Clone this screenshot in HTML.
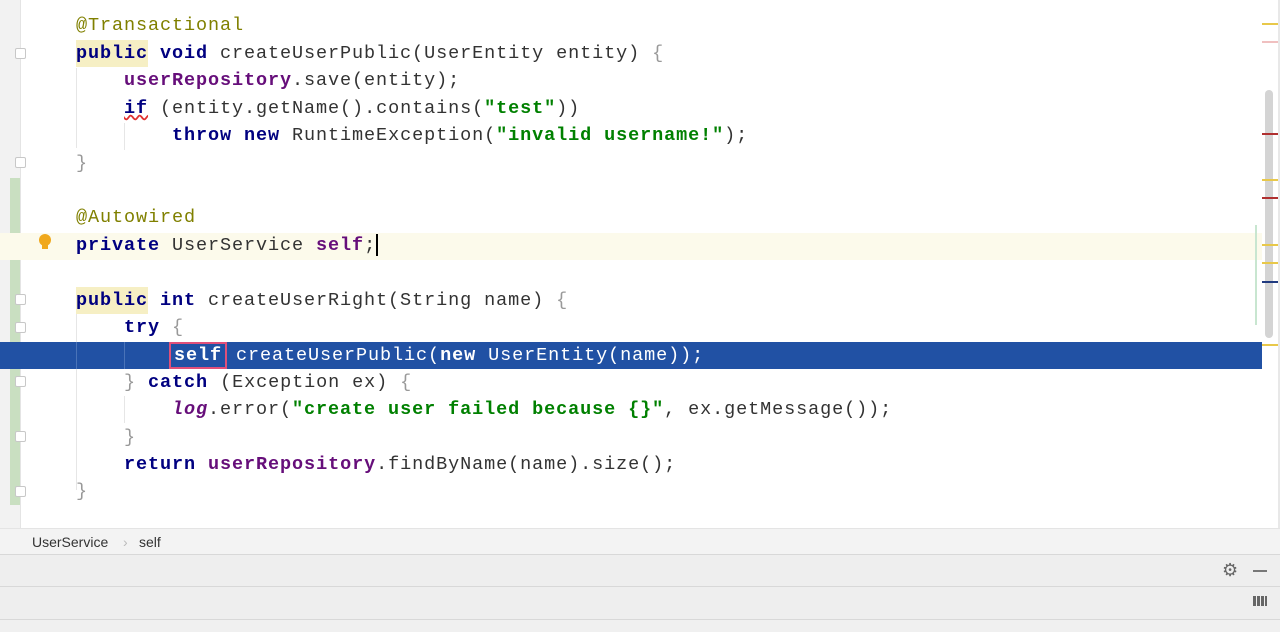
<!DOCTYPE html>
<html><head><meta charset="utf-8"><style>
*{margin:0;padding:0;box-sizing:border-box}
body{width:1280px;height:632px;overflow:hidden;background:#fff;position:relative;font-family:"Liberation Mono",monospace}
.gut{position:absolute;left:0;top:0;width:21px;height:528px;background:#f2f2f2;border-right:1px solid #e4e4e4}
.chg{position:absolute;left:10px;top:178px;width:10px;height:327px;background:#c9dfc1}
.line{position:absolute;left:0;width:1262px;height:27px}
.code{position:absolute;left:76px;font-size:18.5px;letter-spacing:0.9px;line-height:27px;white-space:pre;color:#333}
.k{color:#000080;font-weight:bold}
.a{color:#808000}
.f{color:#660e7a;font-weight:bold}
.s{color:#008000;font-weight:bold}
.g{color:#999}
.ind{position:absolute;width:1px;background:#e6e6e6}
.fold{position:absolute;left:15px;width:11px;height:11px;border:1px solid #c8c8c8;background:#fff;border-radius:2px}
.mk{position:absolute;left:1262px;width:16px;height:2px}
</style></head><body>
<div class="gut"></div>
<div class="chg"></div>
<div class="line" style="top:233px;background:#fcfaeb"></div>
<div class="line" style="top:342px;background:#2151a4;height:27px"></div>
<div style="position:absolute;left:76px;top:40px;width:72px;height:27px;background:#f6efc4"></div>
<div style="position:absolute;left:76px;top:287px;width:72px;height:27px;background:#f6efc4"></div>
<div class="ind" style="left:76px;top:68px;height:80px"></div>
<div class="ind" style="left:124px;top:123px;height:27px"></div>
<div class="ind" style="left:76px;top:314px;height:176px"></div>
<div class="ind" style="left:124px;top:342px;height:27px;background:#4a73b8"></div>
<div class="ind" style="left:76px;top:342px;height:27px;background:#4a73b8"></div>
<div class="ind" style="left:124px;top:396px;height:27px"></div>
<div class="fold" style="top:48px"></div>
<div class="fold" style="top:157px"></div>
<div class="fold" style="top:294px"></div>
<div class="fold" style="top:322px"></div>
<div class="fold" style="top:376px"></div>
<div class="fold" style="top:431px"></div>
<div class="fold" style="top:486px"></div>
<div style="position:absolute;left:39px;top:234px;width:12px;height:12px;border-radius:50%;background:#f0a81c"></div>
<div style="position:absolute;left:42px;top:245px;width:6px;height:4px;background:#f0a81c"></div>
<div class="code" style="top:12px"><span class="a">@Transactional</span></div>
<div class="code" style="top:40px"><span class="k">public void</span> createUserPublic(UserEntity entity) <span class="g">{</span></div>
<div class="code" style="top:67px">    <span class="f">userRepository</span>.save(entity);</div>
<div class="code" style="top:95px">    <span class="k" style="text-decoration:underline wavy #e03030">if</span> (entity.getName().contains(<span class="s">"test"</span>))</div>
<div class="code" style="top:122px">        <span class="k">throw new</span> RuntimeException(<span class="s">"invalid username!"</span>);</div>
<div class="code" style="top:150px"><span class="g">}</span></div>
<div class="code" style="top:204px"><span class="a">@Autowired</span></div>
<div class="code" style="top:232px"><span class="k">private</span> UserService <span class="f">self</span>;<span style="display:inline-block;width:2px;height:22px;background:#000;vertical-align:middle"></span></div>
<div class="code" style="top:287px"><span class="k">public int</span> createUserRight(String name) <span class="g">{</span></div>
<div class="code" style="top:314px">    <span class="k">try</span> <span class="g">{</span></div>
<div class="code" style="top:342px;color:#fff">        <span style="font-weight:bold;outline:2px solid #e0507a;outline-offset:1px;padding:0 2px">self</span> createUserPublic(<span style="font-weight:bold">new</span> UserEntity(name));</div>
<div class="code" style="top:369px">    <span class="g">}</span> <span class="k">catch</span> (Exception ex) <span class="g">{</span></div>
<div class="code" style="top:396px">        <span class="f" style="font-style:italic">log</span>.error(<span class="s">"create user failed because {}"</span>, ex.getMessage());</div>
<div class="code" style="top:424px">    <span class="g">}</span></div>
<div class="code" style="top:451px">    <span class="k">return</span> <span class="f">userRepository</span>.findByName(name).size();</div>
<div class="code" style="top:478px"><span class="g">}</span></div>
<div style="position:absolute;left:1265px;top:90px;width:8px;height:248px;background:#d4d4d4;border-radius:4px"></div>
<div style="position:absolute;left:1255px;top:225px;width:2px;height:100px;background:#c8e6d0"></div>
<div class="mk" style="top:23px;background:#e8c84a"></div>
<div class="mk" style="top:41px;background:#f0c0c0"></div>
<div class="mk" style="top:133px;background:#b03030"></div>
<div class="mk" style="top:179px;background:#e8c84a"></div>
<div class="mk" style="top:197px;background:#b03030"></div>
<div class="mk" style="top:244px;background:#e8c84a"></div>
<div class="mk" style="top:262px;background:#e8c84a"></div>
<div class="mk" style="top:281px;background:#203a80"></div>
<div class="mk" style="top:344px;background:#e8c84a"></div>
<div style="position:absolute;left:1278px;top:0;width:2px;height:528px;background:#e8e8e8"></div>
<div style="position:absolute;left:0;top:528px;width:1280px;height:27px;background:#f3f3f3;border-top:1px solid #e4e4e4;border-bottom:1px solid #d8d8d8;font-family:'Liberation Sans',sans-serif;font-size:14px;color:#333;line-height:26px"><span style="position:absolute;left:32px">UserService</span><span style="position:absolute;left:123px;color:#bbb">›</span><span style="position:absolute;left:139px">self</span></div>
<div style="position:absolute;left:0;top:555px;width:1280px;height:32px;background:#eeeeee;border-bottom:1px solid #d8d8d8"></div>
<div style="position:absolute;left:1222px;top:560px;font-family:'DejaVu Sans',sans-serif;font-size:18px;color:#666">⚙</div>
<div style="position:absolute;left:1253px;top:570px;width:14px;height:2px;background:#777"></div>
<div style="position:absolute;left:0;top:587px;width:1280px;height:33px;background:#eeeeee;border-bottom:1px solid #d8d8d8"></div>
<div style="position:absolute;left:1253px;top:596px;width:14px;height:10px;background:repeating-linear-gradient(90deg,#666 0 3px,transparent 3px 4px)"></div>
<div style="position:absolute;left:0;top:620px;width:1280px;height:12px;background:#f0f0f0"></div>
</body></html>
